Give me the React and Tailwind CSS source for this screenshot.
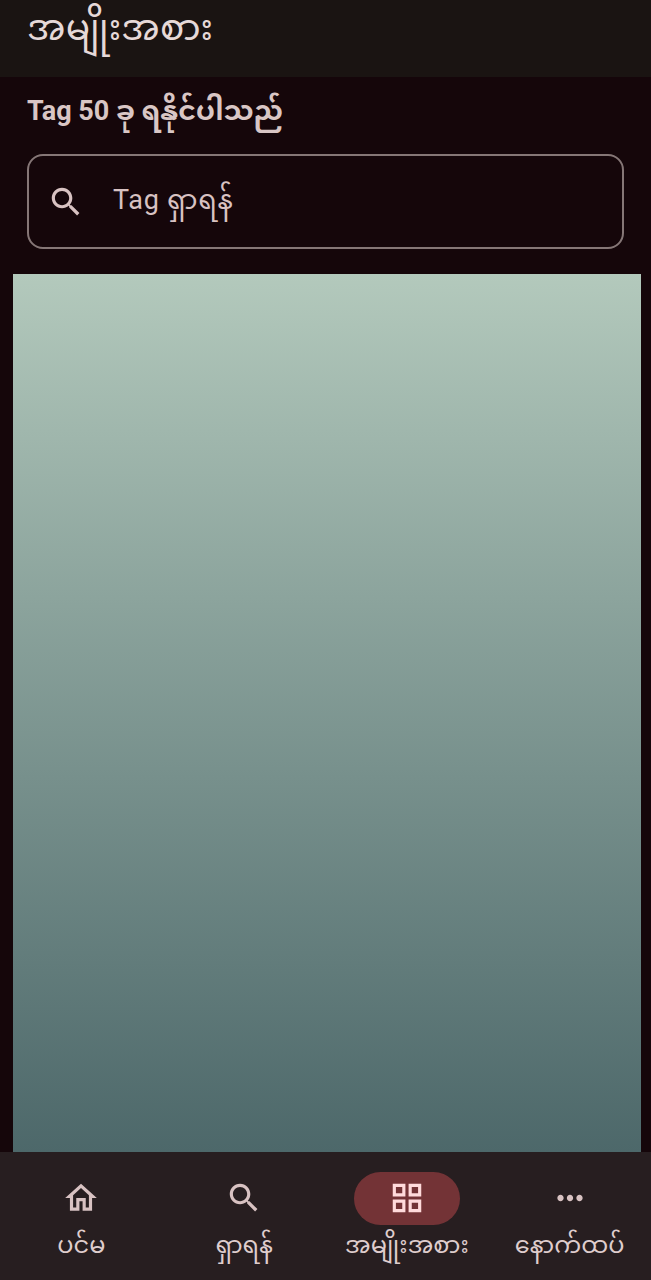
function HomeIcon() {
  return (
    <svg width="38" height="38" viewBox="0 0 24 24" fill="#d8c2c2">
      <path d="M12 5.69l5 4.5V18h-2v-6H9v6H7v-7.81l5-4.5M12 3L2 12h3v8h6v-6h2v6h6v-8h3L12 3z" />
    </svg>
  );
}

function SearchIcon({ size = 38, color = "#d8c2c2" }) {
  return (
    <svg width={size} height={size} viewBox="0 0 24 24" fill={color}>
      <path d="M15.5 14h-.79l-.28-.27C15.41 12.59 16 11.11 16 9.5 16 5.91 13.09 3 9.5 3S3 5.91 3 9.5 5.91 16 9.5 16c1.61 0 3.09-.59 4.23-1.57l.27.28v.79l5 4.99L20.49 19l-4.99-5zm-6 0C7.01 14 5 11.99 5 9.5S7.01 5 9.5 5 14 7.01 14 9.5 11.99 14 9.5 14z" />
    </svg>
  );
}

function GridIcon() {
  return (
    <svg width="38" height="38" viewBox="0 0 24 24" fill="#ffdadb">
      <path d="M3 3v8h8V3H3zm6 6H5V5h4v4zm-6 4v8h8v-8H3zm6 6H5v-4h4v4zm4-16v8h8V3h-8zm6 6h-4V5h4v4zm-6 4v8h8v-8h-8zm6 6h-4v-4h4v4z" />
    </svg>
  );
}

function MoreIcon() {
  return (
    <svg width="38" height="38" viewBox="0 0 24 24" fill="#d8c2c2">
      <path d="M6 10c-1.1 0-2 .9-2 2s.9 2 2 2 2-.9 2-2-.9-2-2-2zm12 0c-1.1 0-2 .9-2 2s.9 2 2 2 2-.9 2-2-.9-2-2-2zm-6 0c-1.1 0-2 .9-2 2s.9 2 2 2 2-.9 2-2-.9-2-2-2z" />
    </svg>
  );
}

function NavItem({ icon, label, active }) {
  return (
    <div className="flex flex-1 flex-col items-center pt-5">
      <div className={`flex h-[53px] w-[106px] items-center justify-center rounded-full pb-[2px] ${active ? "bg-[#733336]" : ""}`}>
        {icon}
      </div>
      <span className="mt-[2px] text-[24px] leading-[36px] text-[#dfcdcd]">{label}</span>
    </div>
  );
}

export default function App() {
  return (
    <div className="flex h-[1280px] w-[651px] flex-col overflow-hidden bg-[#15060a] font-['Roboto','Noto_Sans','Noto_Sans_Myanmar','Padauk',sans-serif]">
      <header className="flex h-[77px] shrink-0 items-start bg-[#1a1412] pl-[27px]">
        <h1 className="text-[36px] leading-[57px] tracking-[0.2px] text-[#e6d9d8]">အမျိုးအစား</h1>
      </header>
      <p className="mt-[14px] pl-[27px] text-[27px] leading-[40px] font-bold text-[#d9c6c5]">Tag 50 ခု ရနိုင်ပါသည်</p>
      <div className="mx-[27px] mt-[23px] flex h-[95px] shrink-0 items-center rounded-[16px] border-2 border-[#857676] pl-[18px]">
        <SearchIcon />
        <span className="mb-[4px] ml-[28px] text-[27px] leading-[40px] tracking-[0.7px] text-[#d8c2c2]">Tag ရှာရန်</span>
      </div>
      <div className="mt-[25px] mr-[10px] ml-[13px] min-h-0 flex-1 bg-gradient-to-b from-[#b3c9bc] to-[#4d686a]" />
      <nav className="flex h-[128px] shrink-0 bg-[#271e20]">
        <NavItem icon={<HomeIcon />} label="ပင်မ" />
        <NavItem icon={<SearchIcon />} label="ရှာရန်" />
        <NavItem icon={<GridIcon />} label="အမျိုးအစား" active />
        <NavItem icon={<MoreIcon />} label="နောက်ထပ်" />
      </nav>
    </div>
  );
}
